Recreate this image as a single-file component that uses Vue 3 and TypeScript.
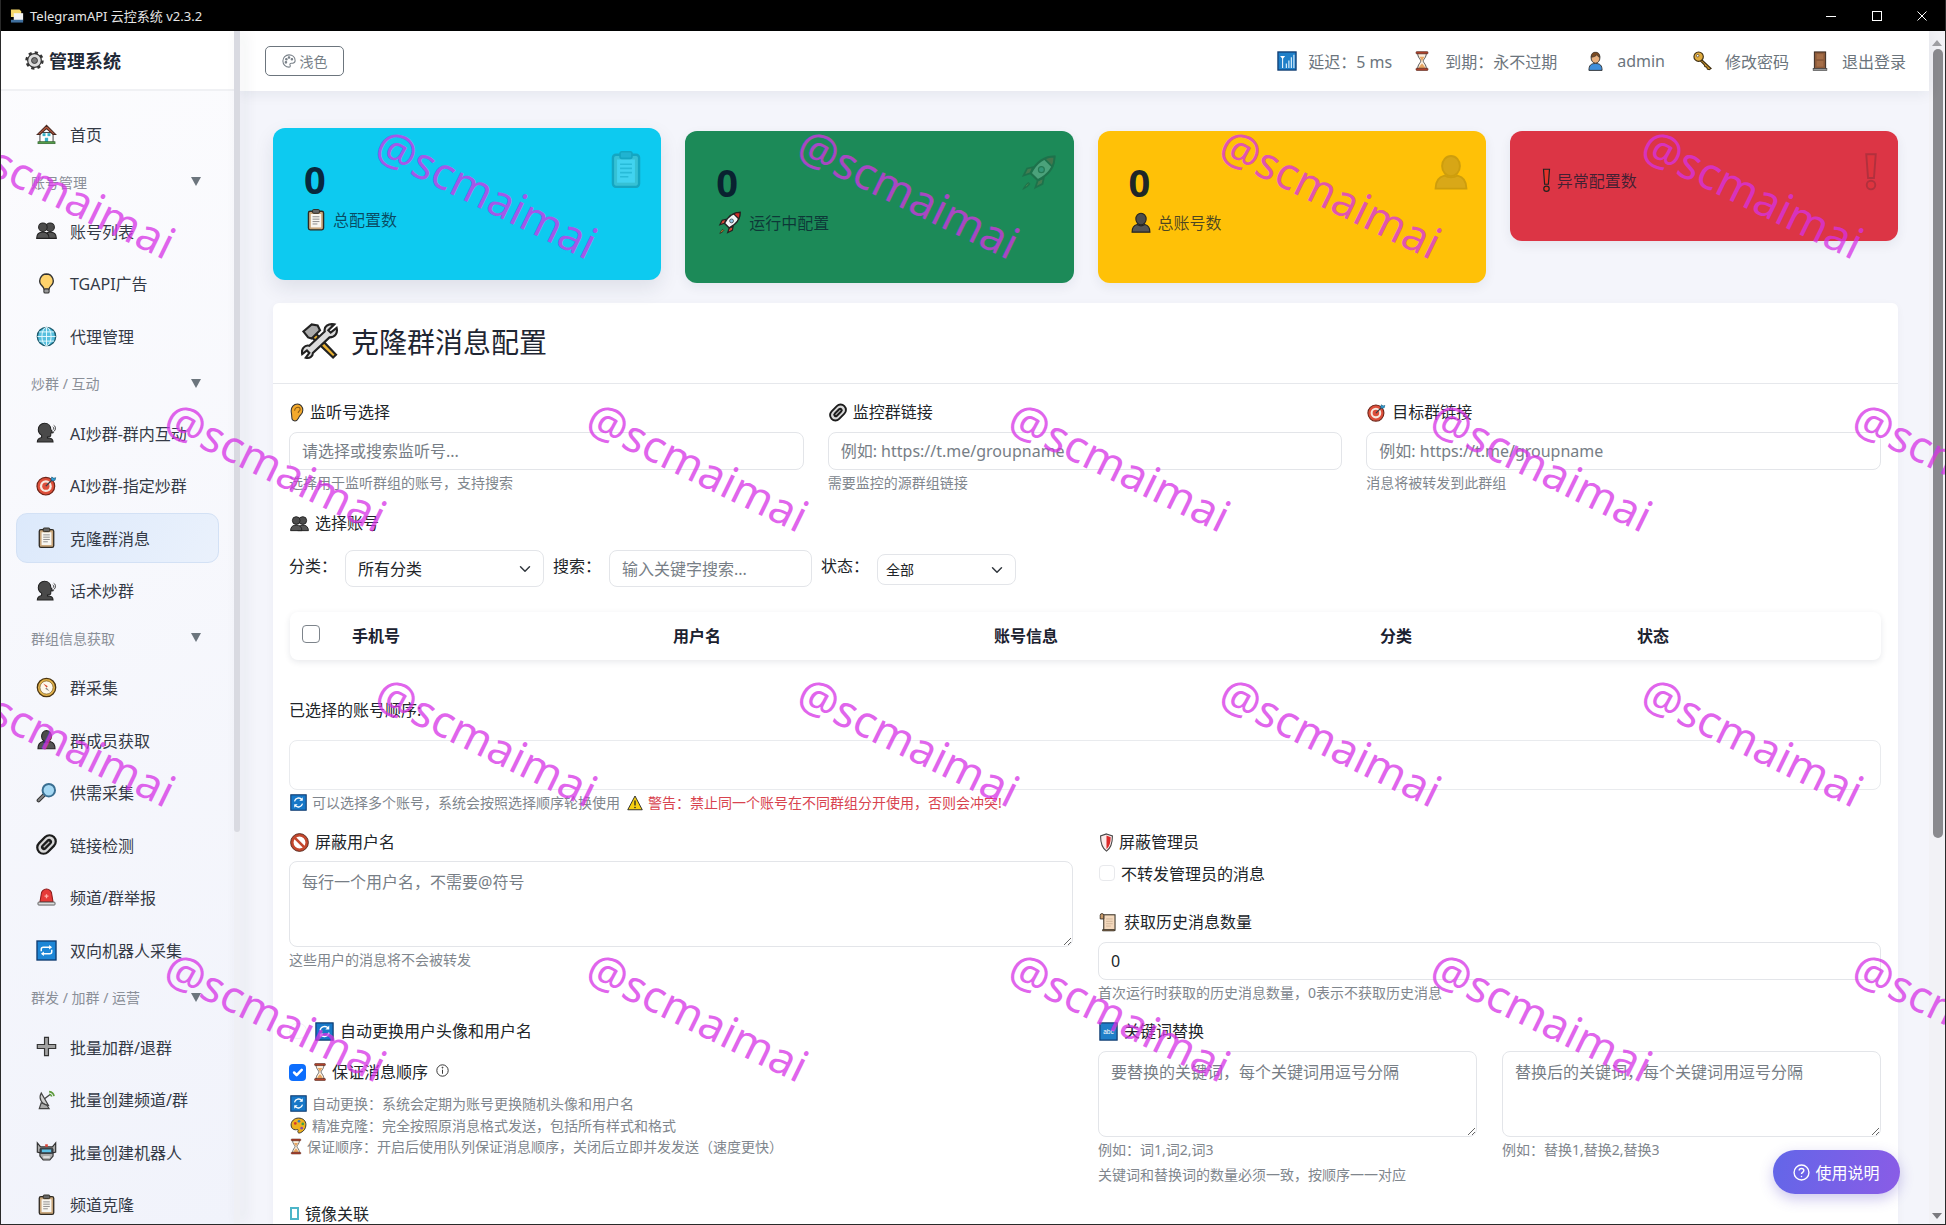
<script setup lang="ts">
interface NavRow { text: string; icon?: string; active?: boolean }

const navRows: NavRow[] = [
  { text: '首页', icon: 'house' },
  { text: '账号管理' },
  { text: '账号列表', icon: 'people' },
  { text: 'TGAPI广告', icon: 'bulb' },
  { text: '代理管理', icon: 'globe' },
  { text: '炒群 / 互动' },
  { text: 'AI炒群-群内互动', icon: 'speak' },
  { text: 'AI炒群-指定炒群', icon: 'target' },
  { text: '克隆群消息', icon: 'clipboard', active: true },
  { text: '话术炒群', icon: 'speak' },
  { text: '群组信息获取' },
  { text: '群采集', icon: 'compass' },
  { text: '群成员获取', icon: 'bust' },
  { text: '供需采集', icon: 'magnifier' },
  { text: '链接检测', icon: 'link' },
  { text: '频道/群举报', icon: 'siren' },
  { text: '双向机器人采集', icon: 'repeat' },
  { text: '群发 / 加群 / 运营' },
  { text: '批量加群/退群', icon: 'plus' },
  { text: '批量创建频道/群', icon: 'satellite' },
  { text: '批量创建机器人', icon: 'robot' },
  { text: '频道克隆', icon: 'clipboard' }
]

const stats = [
  { cls: 'cyan', num: '0', icon: 'clipboard', w: 22, label: '总配置数' },
  { cls: 'green', num: '0', icon: 'rocket', w: 26, label: '运行中配置' },
  { cls: 'yellow', num: '0', icon: 'bust', w: 22, label: '总账号数' },
  { cls: 'red', num: '', icon: 'exclaim', w: 9, label: '异常配置数' }
]

const topItems = [
  { icon: 'signal', text: '延迟：5 ms', w: 20, gap: 11, ml: 0 },
  { icon: 'hourglass', text: '到期：永不过期', w: 16, gap: 15, ml: 22 },
  { icon: 'person', text: 'admin', w: 17, gap: 13, ml: 30 },
  { icon: 'key', text: '修改密码', w: 22, gap: 11, ml: 27 },
  { icon: 'door', text: '退出登录', w: 16, gap: 14, ml: 23 }
]

const tableCols = ['手机号', '用户名', '账号信息', '分类', '状态']

const topFields = [
  { icon: 'ear', w: 14, label: '监听号选择', ph: '请选择或搜索监听号...', hint: '选择用于监听群组的账号，支持搜索' },
  { icon: 'link', w: 18, label: '监控群链接', ph: '例如: https://t.me/groupname', hint: '需要监控的源群组链接' },
  { icon: 'target', w: 19, label: '目标群链接', ph: '例如: https://t.me/groupname', hint: '消息将被转发到此群组' }
]

const marks: { x: number; y: number }[] = []
const rowsY = [193, 466, 741, 1016]
rowsY.forEach((y, r) => {
  const start = r % 2 === 0 ? 65 : 276
  for (let k = 0; k < 5; k++) marks.push({ x: start + 422 * k, y })
})
</script>

<template>
  <div class="win">
    <svg class="defs" width="0" height="0" aria-hidden="true">
      <defs>
        <symbol id="i-gear" viewBox="0 0 32 32">
          <circle cx="16" cy="16" r="13" fill="none" stroke="#333" stroke-width="5" stroke-dasharray="5.2 5"/>
          <circle cx="16" cy="16" r="11.5" fill="#ddd" stroke="#333" stroke-width="2"/>
          <circle cx="16" cy="16" r="5" fill="#777" stroke="#333" stroke-width="1.5"/>
        </symbol>
        <symbol id="i-house" viewBox="0 0 32 32">
          <rect x="6" y="13" width="20" height="15" fill="#fff" stroke="#444" stroke-width="1.5"/>
          <path d="M16 2 2 16h4l10-9 10 9h4z" fill="#b8583e" stroke="#4a2a20" stroke-width="1.6"/>
          <rect x="10" y="14" width="4.5" height="4.5" fill="#38b2c8"/>
          <rect x="17.5" y="14" width="4.5" height="4.5" fill="#38b2c8"/>
          <rect x="13.5" y="21" width="5" height="7" fill="#38b2c8"/>
          <rect x="3" y="27" width="26" height="3" fill="#55a04a" stroke="#2e5e2a"/>
        </symbol>
        <symbol id="i-people" viewBox="0 0 32 32">
          <circle cx="21.5" cy="11" r="6.5" fill="#4c4c4c" stroke="#222" stroke-width="1.6"/>
          <path d="M13 28c0-6 3-9.500 8.500-9.500S31 22 31 28z" fill="#555" stroke="#222" stroke-width="1.6"/>
          <circle cx="10.500" cy="11" r="6.5" fill="#4c4c4c" stroke="#222" stroke-width="1.6"/>
          <path d="M1 28c0-6 3.500-9.500 9.500-9.500S20 22 20 28z" fill="#555" stroke="#222" stroke-width="1.6"/>
        </symbol>
        <symbol id="i-bulb" viewBox="0 0 32 32">
          <path d="M16 1.500A10.500 10.500 0 0 0 9.500 20c1.500 1.300 2.500 3 2.500 4.500h8c0-1.500 1-3.200 2.500-4.500A10.500 10.500 0 0 0 16 1.500z" fill="#ffd36b" stroke="#333" stroke-width="2"/>
          <rect x="12" y="24.500" width="8" height="6" rx="2" fill="#999" stroke="#333" stroke-width="1.6"/>
        </symbol>
        <symbol id="i-globe" viewBox="0 0 32 32">
          <circle cx="16" cy="16" r="14" fill="#57bfde" stroke="#1b5a6d" stroke-width="2"/>
          <ellipse cx="16" cy="16" rx="7" ry="14" fill="none" stroke="#e8fbff" stroke-width="1.4"/>
          <path d="M16 2v28M2 16h28M4.500 9h23M4.500 23h23" stroke="#e8fbff" stroke-width="1.4" fill="none"/>
        </symbol>
        <symbol id="i-speak" viewBox="0 0 32 32">
          <path d="M13 2c6 0 9.500 4 9.500 9l2.500 5-2.500 1v3c0 2-2 3-5 3v1.500c5 0 8.500 1.500 8.500 6H2c0-4 2.500-6 6.500-7v-3.500C5 18 3.500 15 3.500 11.500 3.500 6 7.500 2 13 2z" fill="#4a4a4a" stroke="#222" stroke-width="1.6"/>
          <path d="M25.500 7.500c2 1 2 3.500 0 4.500M27 5c3.500 2 3.500 7 0 9.500M25.500 14c1.500.8 1.500 2.500 0 3.500" fill="none" stroke="#333" stroke-width="1.5"/>
        </symbol>
        <symbol id="i-target" viewBox="0 0 32 32">
          <circle cx="15" cy="17" r="13.500" fill="#dd4f3a" stroke="#6e2418" stroke-width="1.8"/>
          <circle cx="15" cy="17" r="9" fill="#f7e9df"/>
          <circle cx="15" cy="17" r="5.500" fill="#dd4f3a"/>
          <path d="M15 17 27 5" stroke="#30404a" stroke-width="2"/>
          <path d="M24 3l3 2 3-1-1 4-4 1-2-2z" fill="#2f9fd8" stroke="#185a7c"/>
        </symbol>
        <symbol id="i-clipboard" viewBox="0 0 32 32">
          <rect x="5" y="4" width="22" height="27" rx="2.500" fill="#c9a67a" stroke="#2f2a22" stroke-width="2"/>
          <rect x="8.500" y="8" width="15" height="19.500" fill="#f8f6f0"/>
          <rect x="11" y="1.500" width="10" height="5.500" rx="1.500" fill="#666" stroke="#2f2a22" stroke-width="1.4"/>
          <path d="M11 12h10M11 15.500h10M11 19h10M11 22.500h7" stroke="#888" stroke-width="1.4"/>
        </symbol>
        <symbol id="i-compass" viewBox="0 0 32 32">
          <circle cx="16" cy="16" r="14" fill="#e3b34b" stroke="#4a3410" stroke-width="2"/>
          <circle cx="16" cy="16" r="10" fill="#fff8ea" stroke="#6e521c" stroke-width="1"/>
          <path d="M11 10l7 4-2 2z" fill="#d8472f"/>
          <path d="M21 22l-7-4 2-2z" fill="#8a8a8a"/>
        </symbol>
        <symbol id="i-bust" viewBox="0 0 32 32">
          <ellipse cx="16" cy="11" rx="7.500" ry="8.500" fill="#4c4c4c" stroke="#222" stroke-width="1.6"/>
          <path d="M3 30c0-7 3-10 7.500-11 3 2 8 2 11 0C26 20 29 23 29 30z" fill="#555" stroke="#222" stroke-width="1.6"/>
        </symbol>
        <symbol id="i-magnifier" viewBox="0 0 32 32">
          <path d="M12 20 4 28" stroke="#333" stroke-width="6" stroke-linecap="round"/>
          <path d="M12 20 4 28" stroke="#888" stroke-width="3" stroke-linecap="round"/>
          <circle cx="19.500" cy="12.500" r="9.500" fill="#a5d8f3" stroke="#3a6f92" stroke-width="3"/>
        </symbol>
        <symbol id="i-link" viewBox="0 0 32 32">
          <g transform="rotate(-45 16 16)">
            <rect x="0" y="6.500" width="32" height="19" rx="9.500" fill="#d8d8d8" stroke="#1c1c1c" stroke-width="3.400"/>
            <rect x="6" y="11.500" width="20" height="9" rx="4.500" fill="#1c1c1c"/>
            <path d="M10 16h12" stroke="#bbb" stroke-width="2"/>
          </g>
        </symbol>
        <symbol id="i-siren" viewBox="0 0 32 32">
          <path d="M6 23 8 11a8 8 0 0 1 16 0l2 12z" fill="#e63a38" stroke="#8c1b1b" stroke-width="1.600"/>
          <path d="M16 11v6M13 14h6" stroke="#ffb0a8" stroke-width="2"/>
          <rect x="3" y="23" width="26" height="4.500" rx="1.200" fill="#ddd" stroke="#555" stroke-width="1.400"/>
        </symbol>
        <symbol id="i-repeat" viewBox="0 0 32 32">
          <rect x="1.500" y="1.500" width="29" height="29" fill="#1d86d6" stroke="#0e3a70" stroke-width="2"/>
          <path d="M8 17v-3a3 3 0 0 1 3-3h11M24 15v3a3 3 0 0 1-3 3H10" fill="none" stroke="#fff" stroke-width="2.200"/>
          <path d="M20 7.500l4.500 3.500-4.500 3.500zM12 17.500 7.500 21l4.500 3.500z" fill="#fff"/>
        </symbol>
        <symbol id="i-refresh" viewBox="0 0 32 32">
          <rect x="1.500" y="1.500" width="29" height="29" fill="#1778c8" stroke="#0e3a70" stroke-width="2"/>
          <path d="M8.500 14a8 8 0 0 1 14-3.500M23.500 18a8 8 0 0 1-14 3.500" fill="none" stroke="#fff" stroke-width="2.400"/>
          <path d="M24 6v6.500h-6.500zM8 26v-6.500h6.500z" fill="#fff"/>
        </symbol>
        <symbol id="i-plus" viewBox="0 0 32 32">
          <path d="M13 2h6v11h11v6H19v11h-6V19H2v-6h11z" fill="#a2a2a2" stroke="#333" stroke-width="1.800"/>
        </symbol>
        <symbol id="i-satellite" viewBox="0 0 32 32">
          <path d="M8 6C4 13 7 23 19 25z" fill="#cfcfcf" stroke="#444" stroke-width="1.800"/>
          <path d="M13 15 22 8" stroke="#444" stroke-width="2"/>
          <path d="M20 4c4 .5 7 3 7.500 7M20 8c2 .3 3.500 1.500 4 3.500" fill="none" stroke="#5c9a3a" stroke-width="2.400"/>
          <path d="M8 21 5 30h15l-3-5z" fill="#aaa" stroke="#444" stroke-width="1.800"/>
        </symbol>
        <symbol id="i-robot" viewBox="0 0 32 32">
          <path d="M2 3l5 6h18l5-6v14l-4 1v5l-5 6H11l-5-6v-5l-4-1z" fill="#a9a9a9" stroke="#333" stroke-width="1.800"/>
          <rect x="6" y="11" width="20" height="8" rx="2" fill="#3b4a55" stroke="#222"/>
          <rect x="9" y="13" width="14" height="4" fill="#5cc1e6"/>
          <rect x="14" y="5" width="4" height="4" fill="#d8453a"/>
          <rect x="11" y="23" width="10" height="3" fill="#ddd"/>
        </symbol>
        <symbol id="i-hourglass" viewBox="0 0 24 32">
          <path d="M5 3c0 8 5 10 5 13s-5 5-5 13h14c0-8-5-10-5-13s5-5 5-13z" fill="#fbeedd" stroke="#444" stroke-width="1.400"/>
          <path d="M8 9c2 3 3 5 4 7 1-2 2-4 4-7zM7 27c1-3 3-5 5-7 2 2 4 4 5 7z" fill="#e8a763"/>
          <rect x="2.500" y="1" width="19" height="3.500" rx="1" fill="#b5442c" stroke="#4a1a10"/>
          <rect x="2.500" y="27.500" width="19" height="3.500" rx="1" fill="#b5442c" stroke="#4a1a10"/>
        </symbol>
        <symbol id="i-signal" viewBox="0 0 32 32">
          <rect x="1.500" y="1.500" width="29" height="29" fill="#1f7fc8" stroke="#0e3a70" stroke-width="2"/>
          <path d="M5 8h8l-3.200 4v15H8.200V12z" fill="#fff"/>
          <path d="M14 20h2v7h-2zM18 15h2v12h-2zM22 10h2v17h-2zM26 6h2v21h-2z" fill="#cfe9fa"/>
        </symbol>
        <symbol id="i-person" viewBox="0 0 24 32">
          <path d="M1.500 31c0-8 3-11 10.500-11s10.500 3 10.500 11z" fill="#3f8fdc" stroke="#333" stroke-width="1.500"/>
          <ellipse cx="12" cy="11" rx="7" ry="8.500" fill="#e9b07e" stroke="#333" stroke-width="1.500"/>
          <path d="M5 10C5 4 8 2 12 2s7 2 7 8c-2 0-4-2-5-4-1 2-5 4-9 4z" fill="#7a4a22" stroke="#333"/>
        </symbol>
        <symbol id="i-key" viewBox="0 0 32 32">
          <path d="M14 14l15 14-3 2-3-1-1-3-3-1-1-3-6-6z" fill="#d19a2f" stroke="#3c2c10" stroke-width="1.700"/>
          <circle cx="9" cy="9" r="7.500" fill="#e0ab3e" stroke="#3c2c10" stroke-width="1.800"/>
          <circle cx="7.500" cy="7.500" r="2" fill="#fff" stroke="#3c2c10"/>
        </symbol>
        <symbol id="i-door" viewBox="0 0 24 32">
          <rect x="3" y="1.500" width="18" height="27" fill="#8c5a3a" stroke="#3a2a20" stroke-width="1.600"/>
          <rect x="6.500" y="5" width="11" height="8" fill="#a56e48"/>
          <rect x="6.500" y="16" width="11" height="9" fill="#a56e48"/>
          <rect x="1" y="28" width="22" height="3" fill="#999" stroke="#3a3a3a"/>
        </symbol>
        <symbol id="i-rocket" viewBox="0 0 32 32">
          <path d="M9 17 3 19l3-6 5-1zM15 23l-2 6 6-3 1-5z" fill="#d44a3a" stroke="#222" stroke-width="1.500"/>
          <path d="M7 25c-2 1-3 3-4 5 2-1 4-2 5-4z" fill="#f39a2e" stroke="#222"/>
          <path d="M29 3c-8 0-15 4-20 14l6 6c10-5 14-12 14-20z" fill="#f3f6f8" stroke="#222" stroke-width="1.800"/>
          <path d="M29 3c-3 0-6 .6-8.500 1.800l6.700 6.700C28.400 9 29 6 29 3z" fill="#d12f2a" stroke="#222" stroke-width="1.500"/>
          <circle cx="18" cy="14" r="2.500" fill="#8cc8e8" stroke="#444"/>
        </symbol>
        <symbol id="i-warning" viewBox="0 0 32 32">
          <path d="M16 2 30.500 29.500h-29z" fill="#f6cf12" stroke="#222" stroke-width="1.800"/>
          <path d="M16 11v10" stroke="#222" stroke-width="2.600"/>
          <circle cx="16" cy="25" r="1.600" fill="#222"/>
        </symbol>
        <symbol id="i-ban" viewBox="0 0 32 32">
          <circle cx="16" cy="16" r="12.500" fill="#fff" stroke="#c4482e" stroke-width="5"/>
          <path d="M7 7l18 18" stroke="#c4482e" stroke-width="4.500"/>
          <circle cx="16" cy="16" r="15" fill="none" stroke="#4a1e14" stroke-width="1.400"/>
        </symbol>
        <symbol id="i-ear" viewBox="0 0 24 32">
          <path d="M13 1.500C6 1.500 2 7 2 13c0 4 1 6 1 10 0 4 2 7.500 5.500 7.500C13 30.500 14 26 16 23c2-3 6-5 6-11C22 6 18 1.500 13 1.500z" fill="#f3a92c" stroke="#333" stroke-width="1.800"/>
          <path d="M8 13c0-4 3-6 6-6 3 0 4 3 3 5-1 2-3 2-3 5" fill="none" stroke="#8a5a12" stroke-width="1.800"/>
        </symbol>
        <symbol id="i-shield" viewBox="0 0 24 32">
          <path d="M12 1.500 22 5c0 12-2 20-10 25.500C4 25 2 17 2 5z" fill="#fbeaea" stroke="#444" stroke-width="1.800"/>
          <path d="M12 4v23c5-4 7-11 7-20z" fill="#dc2a2a"/>
        </symbol>
        <symbol id="i-scroll" viewBox="0 0 32 32">
          <rect x="8" y="3" width="19" height="26" fill="#f4d9bd" stroke="#3c3428" stroke-width="1.800"/>
          <path d="M2 4a3 3 0 0 1 6 0v6H2zM6 28h20v2H6z" fill="#c99a6a" stroke="#3c3428" stroke-width="1.500"/>
          <path d="M12 10h11M12 14h11M12 18h11M12 22h8" stroke="#c9ad90" stroke-width="1.300"/>
        </symbol>
        <symbol id="i-abc" viewBox="0 0 32 32">
          <rect x="1.500" y="1.500" width="29" height="29" fill="#1f7fc8" stroke="#0e3a70" stroke-width="2"/>
          <text x="16" y="20" font-size="11" fill="#fff" text-anchor="middle" font-family="Liberation Sans, sans-serif">abc</text>
        </symbol>
        <symbol id="i-palette" viewBox="0 0 32 32">
          <path d="M16 2C8 2 2 8 2 15c0 6 4 9 8 9 3 0 4-1 5 0s-1 3 0 5c1 1.500 3 1.500 5 .5 6-2.500 10-8 10-15C30 7 24 2 16 2z" fill="#efb21e" stroke="#333" stroke-width="1.800"/>
          <circle cx="10" cy="12" r="2.500" fill="#d8382e"/><circle cx="17" cy="8" r="2.500" fill="#2e78c8"/><circle cx="24" cy="13" r="2.500" fill="#3aa04a"/><circle cx="22" cy="21" r="2.500" fill="#8a4aa8"/>
        </symbol>
        <symbol id="i-tools" viewBox="0 0 32 32">
          <path d="M6 8 28 29l2.500-2.500L9 4z" fill="#eab131" stroke="#222" stroke-width="1.800" transform="translate(-1 1)"/>
          <path d="M2 8l7-6 5 1 2 4-7 7-3-1z" fill="#aaa" stroke="#222" stroke-width="1.800"/>
          <path d="M28 2l-5 5 2 2 5-4c1 4-1 8-6 8L10 26c0 3-3 5-6 4l3-4-2-2-4 3c-1-4 2-8 6-7L20 8c-1-4 3-7 8-6z" fill="#dcdcdc" stroke="#222" stroke-width="1.800"/>
        </symbol>
        <symbol id="i-exclaim" viewBox="0 0 12 32">
          <path d="M2 1h8L8.500 21h-5z" fill="#e6332a" stroke="#222" stroke-width="1.600"/>
          <circle cx="6" cy="27" r="3.600" fill="#e6332a" stroke="#222" stroke-width="1.600"/>
        </symbol>
      </defs>
    </svg>

    <div class="titlebar">
      <svg class="app-ic" viewBox="0 0 16 16">
        <path d="M1 1h9l2 2v6H1z" fill="#f5d76a"/>
        <path d="M4 5h10v8H4z" fill="#f3f3f3"/>
        <path d="M1 12h13v3H1z" fill="#3f6f9e"/>
      </svg>
      <span class="app-name">TelegramAPI 云控系统 v2.3.2</span>
      <div class="winbtns">
        <span class="winbtn"><svg width="12" height="12" viewBox="0 0 12 12"><path d="M1 6.500h10" stroke="#fff" stroke-width="1"/></svg></span>
        <span class="winbtn"><svg width="12" height="12" viewBox="0 0 12 12"><rect x="1.500" y="1.500" width="9" height="9" fill="none" stroke="#fff" stroke-width="1"/></svg></span>
        <span class="winbtn"><svg width="12" height="12" viewBox="0 0 12 12"><path d="M1.500 1.500l9 9M10.500 1.500l-9 9" stroke="#fff" stroke-width="1"/></svg></span>
      </div>
    </div>

    <div class="body">
      <aside class="side">
        <div class="brand">
          <svg class="brand-ic"><use href="#i-gear"/></svg>
          <span>管理系统</span>
        </div>
        <nav class="nav">
          <template v-for="row in navRows" :key="row.text">
            <a v-if="row.icon" class="item" :class="{ on: row.active }">
              <svg class="item-ic"><use :href="`#i-${row.icon}`"/></svg>
              <span>{{ row.text }}</span>
            </a>
            <div v-else class="group">
              <span>{{ row.text }}</span>
              <i class="caret"></i>
            </div>
          </template>
        </nav>
      </aside>
      <div class="side-track"><div class="side-thumb"></div></div>

      <main class="main">
        <header class="top">
          <button class="theme">
            <svg width="14" height="14" viewBox="0 0 16 16" fill="none" stroke="currentColor" stroke-width="1.200">
              <path d="M8 1a7 7 0 0 0 0 14c1 0 1.500-.7 1.500-1.400 0-.7-.5-1-.5-1.800 0-.9.700-1.300 1.500-1.300H12c1.700 0 3-1.200 3-3C15 3.600 12 1 8 1z"/>
              <circle cx="5" cy="6" r=".9" fill="currentColor"/><circle cx="8" cy="4" r=".9" fill="currentColor"/><circle cx="11.300" cy="6" r=".9" fill="currentColor"/><circle cx="4.500" cy="9.500" r=".9" fill="currentColor"/>
            </svg>
            <span>浅色</span>
          </button>
          <div class="top-right">
            <div v-for="t in topItems" :key="t.icon" class="top-item" :style="{ marginLeft: t.ml + 'px', gap: t.gap + 'px' }">
              <svg class="top-ic" :style="{ width: t.w + 'px' }"><use :href="`#i-${t.icon}`"/></svg>
              <span>{{ t.text }}</span>
            </div>
          </div>
        </header>

        <div class="content">
          <section class="stats">
            <div v-for="s in stats" :key="s.cls" class="stat" :class="s.cls">
              <div v-if="s.num" class="num">{{ s.num }}</div>
              <div class="stat-label">
                <svg class="stat-ic" :style="{ width: s.w + 'px' }"><use :href="`#i-${s.icon}`"/></svg>
                <span>{{ s.label }}</span>
              </div>
              <svg class="stat-bg"><use :href="`#i-${s.icon}`"/></svg>
            </div>
          </section>

          <section class="panel">
            <div class="panel-head">
              <svg class="panel-ic"><use href="#i-tools"/></svg>
              <h2>克隆群消息配置</h2>
            </div>
            <div class="panel-body">
              <div class="three">
                <div v-for="f in topFields" :key="f.label">
                  <div class="lab"><svg class="ic" :style="{ width: f.w + 'px' }"><use :href="`#i-${f.icon}`"/></svg>{{ f.label }}</div>
                  <input class="ctl" type="text" :placeholder="f.ph" />
                  <div class="hint">{{ f.hint }}</div>
                </div>
              </div>

              <div class="lab acct"><svg class="ic"><use href="#i-people"/></svg>选择账号</div>
              <div class="filters">
                <label>分类：</label>
                <select class="ctl sel cat"><option>所有分类</option></select>
                <label>搜索：</label>
                <input class="ctl search" type="text" placeholder="输入关键字搜索..." />
                <label>状态：</label>
                <select class="ctl sel st"><option>全部</option></select>
              </div>

              <div class="thead">
                <input class="chk" type="checkbox" />
                <b v-for="c in tableCols" :key="c">{{ c }}</b>
              </div>

              <div class="picked-label">已选择的账号顺序:</div>
              <div class="picked"></div>
              <div class="hint line">
                <svg class="hint-ic"><use href="#i-refresh"/></svg>
                <span>可以选择多个账号，系统会按照选择顺序轮换使用</span>
                <svg class="hint-ic warn"><use href="#i-warning"/></svg>
                <span class="danger">警告：禁止同一个账号在不同群组分开使用，否则会冲突!</span>
              </div>

              <div class="two">
                <div class="col">
                  <div class="lab blocked"><svg class="ic"><use href="#i-ban"/></svg>屏蔽用户名</div>
                  <textarea class="ctl area" placeholder="每行一个用户名，不需要@符号"></textarea>
                  <div class="hint">这些用户的消息将不会被转发</div>

                  <div class="lab swrow">
                    <span class="switch"></span>
                    <svg class="ic"><use href="#i-refresh"/></svg>自动更换用户头像和用户名
                  </div>
                  <div class="lab order">
                    <input class="chk checked" type="checkbox" checked />
                    <svg class="ic ic-h"><use href="#i-hourglass"/></svg>保证消息顺序
                    <svg class="info" width="13" height="13" viewBox="0 0 16 16" fill="none" stroke="#333" stroke-width="1.200">
                      <circle cx="8" cy="8" r="7"/><path d="M8 7v5"/><circle cx="8" cy="4.500" r=".6" fill="#333"/>
                    </svg>
                  </div>
                  <div class="notes">
                    <div class="hint line"><svg class="hint-ic"><use href="#i-refresh"/></svg><span>自动更换：系统会定期为账号更换随机头像和用户名</span></div>
                    <div class="hint line"><svg class="hint-ic"><use href="#i-palette"/></svg><span>精准克隆：完全按照原消息格式发送，包括所有样式和格式</span></div>
                    <div class="hint line"><svg class="hint-ic hg"><use href="#i-hourglass"/></svg><span>保证顺序：开启后使用队列保证消息顺序，关闭后立即并发发送（速度更快）</span></div>
                  </div>
                  <div class="lab mirror"><i class="tofu"></i>镜像关联</div>
                </div>

                <div class="col">
                  <div class="lab"><svg class="ic ic-n"><use href="#i-shield"/></svg>屏蔽管理员</div>
                  <label class="admin"><input class="chk faint" type="checkbox" /><span>不转发管理员的消息</span></label>
                  <div class="lab hist"><svg class="ic ic-s"><use href="#i-scroll"/></svg>获取历史消息数量</div>
                  <input class="ctl" type="text" value="0" />
                  <div class="hint">首次运行时获取的历史消息数量，0表示不获取历史消息</div>
                  <div class="lab kw"><svg class="ic ic-s"><use href="#i-abc"/></svg>关键词替换</div>
                  <div class="kw-grid">
                    <div>
                      <textarea class="ctl area" placeholder="要替换的关键词，每个关键词用逗号分隔"></textarea>
                      <div class="hint">例如：词1,词2,词3</div>
                    </div>
                    <div>
                      <textarea class="ctl area" placeholder="替换后的关键词，每个关键词用逗号分隔"></textarea>
                      <div class="hint">例如：替换1,替换2,替换3</div>
                    </div>
                  </div>
                  <div class="hint second">关键词和替换词的数量必须一致，按顺序一一对应</div>
                </div>
              </div>
            </div>
          </section>
        </div>
      </main>

      <div class="main-track">
        <span class="arr up"></span>
        <div class="main-thumb"></div>
        <span class="arr down"></span>
      </div>
    </div>

    <button class="help">
      <svg width="17" height="17" viewBox="0 0 16 16" fill="none" stroke="#fff" stroke-width="1.300">
        <circle cx="8" cy="8" r="7"/>
        <path d="M5.800 6.200C5.800 5 6.800 4.200 8 4.200s2.200.8 2.200 2c0 1.700-2.200 1.700-2.200 3.300"/>
        <circle cx="8" cy="11.700" r=".7" fill="#fff" stroke="none"/>
      </svg>
      <span>使用说明</span>
    </button>

    <div class="marks">
      <span v-for="(m, i) in marks" :key="i" class="mark" :style="{ left: m.x + 'px', top: m.y + 'px' }">@scmaimai</span>
    </div>
  </div>
</template>

<style>
html, body { margin: 0; padding: 0; overflow: hidden; background: #f4f5fb; }
</style>

<style scoped>
* { box-sizing: border-box; }
.defs { position: absolute; }
.win {
  position: relative; width: 1946px; height: 1225px; display: flex; flex-direction: column; overflow: hidden;
  border: 1px solid #2a2a2a; border-top: 0; background: #f4f5fb; color: #212529;
  font-family: "Noto Sans", "Noto Sans CJK SC", sans-serif; font-size: 16px;
}
.titlebar { height: 31px; flex: none; background: #000; color: #e6e6e6; display: flex; align-items: center; padding-left: 9px; font-size: 13px; }
.app-ic { width: 15px; height: 16px; margin-right: 5px; }
.winbtns { margin-left: auto; display: flex; }
.winbtn { width: 45.500px; display: flex; align-items: center; justify-content: center; }
.body { flex: 1; display: flex; min-height: 0; }

.side { width: 233px; flex: none; display: flex; flex-direction: column; background: linear-gradient(160deg, #fcfcfe, #f1f3fb); overflow: hidden; position: relative; z-index: 3; }
.brand { height: 60px; flex: none; background: #fff; border-bottom: 2px solid #f0f1f4; display: flex; align-items: center; padding-left: 24px; gap: 5px; font-size: 18px; font-weight: 700; color: #1f2937; }
.brand-ic { width: 19px; height: 19px; }
.nav { padding: 18px 15px 0 15px; }
.item { display: flex; align-items: center; height: 50.600px; margin-bottom: 2px; padding-left: 19px; gap: 13px; border: 1px solid transparent; border-radius: 11px; color: #343a46; }
.item.on { background: linear-gradient(120deg, #dce9fb, #eaf1fc); border-color: #d3e1f5; }
.item-ic { width: 21px; height: 21px; flex: none; }
.group { height: 44px; display: flex; align-items: center; justify-content: space-between; padding: 0 18px 4px 15px; font-size: 14px; color: #8a8f98; }
.caret { width: 0; height: 0; border-left: 5px solid transparent; border-right: 5px solid transparent; border-top: 9px solid #6c757d; }

.side-track { width: 6px; flex: none; background: #eff0f5; position: relative; z-index: 3; box-shadow: 5px 0 14px rgba(30, 40, 70, .09); }
.side-thumb { height: 801px; background: #d9dae1; border-radius: 0 0 3px 3px; }

.main { flex: 1; min-width: 0; display: flex; flex-direction: column; }
.top { height: 60px; flex: none; background: #fff; display: flex; align-items: center; justify-content: space-between; padding: 0 23px 0 25px; position: relative; z-index: 2; box-shadow: 0 2px 14px rgba(30, 40, 70, .08); color: #6c757d; }
.theme { width: 79px; height: 30px; display: flex; align-items: center; justify-content: center; gap: 4px; background: #fff; color: #777f87; border: 1px solid #6c757d; border-radius: 5px; font: inherit; font-size: 14px; padding: 0; }
.top-right { display: flex; align-items: center; }
.top-item { display: flex; align-items: center; }
.top-ic { height: 20px; flex: none; }

.content { flex: 1; min-height: 0; overflow: hidden; padding: 40px 31px 0 33px; }
.stats { display: grid; grid-template-columns: repeat(4, 1fr); gap: 24px; align-items: start; }
.stat { position: relative; height: 152px; border-radius: 12px; padding: 28px 0 0 31px; box-shadow: 0 4px 12px rgba(30, 40, 70, .07); color: rgba(8, 24, 44, .92); }
.stat.cyan { background: #0dcaf0; transform: translateY(-3px); box-shadow: 0 8px 20px rgba(30, 40, 70, .1); }
.stat.green { background: #1c8a58; }
.stat.yellow { background: #ffc107; }
.stat.red { background: #dc3545; height: 110px; padding-top: 32px; }
.red .stat-bg { right: 8px; }
.num { font-size: 38px; font-weight: 700; line-height: 46px; }
.stat-label { display: flex; align-items: center; gap: 6px; margin-top: 5px; height: 24px; padding-left: 1px; color: rgba(8, 24, 44, .72); }
.stat-ic { height: 25px; flex: none; }
.stat-bg { position: absolute; top: 22px; right: 16px; width: 38px; height: 38px; opacity: .22; }

.panel { margin-top: 20px; background: #fff; border-radius: 6px 6px 0 0; box-shadow: 0 2px 8px rgba(30, 40, 70, .04); }
.panel-head { height: 81px; border-bottom: 1px solid #e6e8ec; display: flex; align-items: center; padding: 0 0 5px 28px; gap: 12px; }
.panel-ic { width: 38px; height: 38px; }
h2 { margin: 0; font-size: 28px; font-weight: 400; color: #1f2633; }
.panel-body { padding: 16px 17px 0 16px; }

.lab { display: flex; align-items: center; gap: 6px; height: 24px; line-height: 24px; color: #212529; }
.ic { width: 19px; height: 19px; flex: none; margin-left: 1px; }
.ic-n { width: 15px; margin-right: -1px; }
.ic-h { width: 16px; height: 18px; margin-left: 1px; margin-right: -1px; }
.ic-s { width: 19px; height: 19px; }
.three { display: grid; grid-template-columns: repeat(3, 1fr); gap: 24px; }
.three .lab { margin-bottom: 8px; }

.ctl { display: block; width: 100%; height: 38px; border: 1px solid #e3e5e9; border-radius: 8px; padding: 0 12px; font: inherit; color: #212529; background: #fff; outline: none; }
.ctl::placeholder { color: #777e86; opacity: 1; }
.area { height: 86px; padding: 8px 12px; line-height: 24px; resize: vertical; }
.hint { font-size: 14px; line-height: 21px; margin-top: 2px; color: #80868d; white-space: nowrap; }
.hint.line { display: flex; align-items: center; gap: 5px; margin-top: 0; }
.hint-ic { width: 17px; height: 17px; flex: none; margin-left: 1px; }
.warn { margin-left: 2px; width: 16px; height: 16px; }
.hg { width: 12px; }
.danger { color: #d8434f; }

.acct { margin-top: 18px; }
.filters { display: flex; align-items: flex-start; margin-top: 15px; }
.filters label { width: 48px; margin: 4px 8px 0 0; line-height: 24px; flex: none; }
.cat { width: 199px; height: 37px; margin-right: 9px; }
.search { width: 203px; height: 37px; margin-right: 9px; }
.sel { appearance: none; background-image: url("data:image/svg+xml,%3csvg xmlns='http://www.w3.org/2000/svg' viewBox='0 0 16 16'%3e%3cpath fill='none' stroke='%23343a40' stroke-linecap='round' stroke-linejoin='round' stroke-width='2' d='m2 5 6 6 6-6'/%3e%3c/svg%3e"); background-repeat: no-repeat; background-position: right 12px center; background-size: 12px 12px; }
.st { width: 139px; height: 31px; margin-top: 4px; font-size: 14px; padding-left: 8px; }

.thead { height: 48px; margin-top: 25px; padding-bottom: 2px; background: #fff; border-radius: 8px; box-shadow: 0 2px 6px rgba(30, 40, 70, .1); display: grid; grid-template-columns: 62px 321px 321px 386px 257px 1fr; align-items: center; margin-left: 1px; }
.thead b { font-weight: 600; color: #1b2230; }
.chk { appearance: none; margin: 0; width: 18px; height: 18px; border: 1px solid #7d848b; border-radius: 4px; background: #fff; display: block; flex: none; }
.thead .chk { margin: -3px 0 0 12px; }
.chk.checked { width: 17px; height: 17px; border: 0; background: #0d6efd url("data:image/svg+xml,%3csvg xmlns='http://www.w3.org/2000/svg' viewBox='0 0 20 20'%3e%3cpath fill='none' stroke='%23fff' stroke-linecap='round' stroke-linejoin='round' stroke-width='3' d='m6 10 3 3 6-6'/%3e%3c/svg%3e") center/100% no-repeat; }
.chk.faint { width: 16px; height: 16px; border-color: #e8e9ec; margin-left: 1px; }

.picked-label { margin-top: 38px; line-height: 24px; }
.picked { height: 50px; margin-top: 18px; border: 1px solid #e9ebee; border-radius: 8px; }
.picked + .hint { margin-top: 2px; height: 21px; }

.two { display: grid; grid-template-columns: 784px 783px; gap: 25px; margin-top: 17px; }
.blocked { margin-bottom: 7px; }
.swrow { margin-top: 49px; gap: 6px; }
.switch { width: 18px; height: 16px; border: 1px solid #f2f3f5; border-radius: 8px; margin-right: 1px; flex: none; }
.order { margin-top: 17px; gap: 5px; }
.info { margin-left: 3px; margin-top: -3px; }
.notes { margin-top: 9px; }
.notes .hint { height: 21.500px; }
.mirror { margin-top: 44px; }
.tofu { width: 9px; height: 13px; border: 2px solid #4db5c8; margin-left: 1px; }

.admin { display: flex; align-items: center; gap: 6px; height: 24px; margin-top: 7px; }
.hist { margin-top: 25px; margin-bottom: 8px; }
.kw { margin-top: 16px; margin-bottom: 8px; }
.kw-grid { display: grid; grid-template-columns: 1fr 1fr; gap: 25px; }
.second { margin-top: 4px; }

.main-track { width: 16px; flex: none; background: #f2f2f6; position: relative; display: flex; flex-direction: column; align-items: center; }
.main-thumb { position: absolute; top: 18px; left: 4px; width: 10px; height: 789px; background: #8a8a8e; border-radius: 5px; }
.arr { position: absolute; width: 0; height: 0; border-left: 5px solid transparent; border-right: 5px solid transparent; }
.arr.up { top: 9px; border-bottom: 6px solid #a0a0a4; }
.arr.down { bottom: 5px; border-top: 6px solid #7a7a7e; }

.help { position: absolute; left: 1772px; top: 1150px; width: 127px; height: 44px; border: 0; border-radius: 22px; background: linear-gradient(100deg, #6366e8, #8a5ce6); color: #fff; font: inherit; display: flex; align-items: center; justify-content: center; gap: 5px; box-shadow: 0 5px 14px rgba(90, 70, 200, .3); padding: 0; z-index: 5; }

.marks { position: absolute; left: -1px; top: 0; width: 1946px; height: 1225px; overflow: hidden; pointer-events: none; z-index: 10; }
.mark { position: absolute; transform: translate(-50%, -50%) rotate(26deg); font-size: 44.500px; line-height: 1; white-space: nowrap; color: rgba(214, 50, 230, .75); }
</style>
